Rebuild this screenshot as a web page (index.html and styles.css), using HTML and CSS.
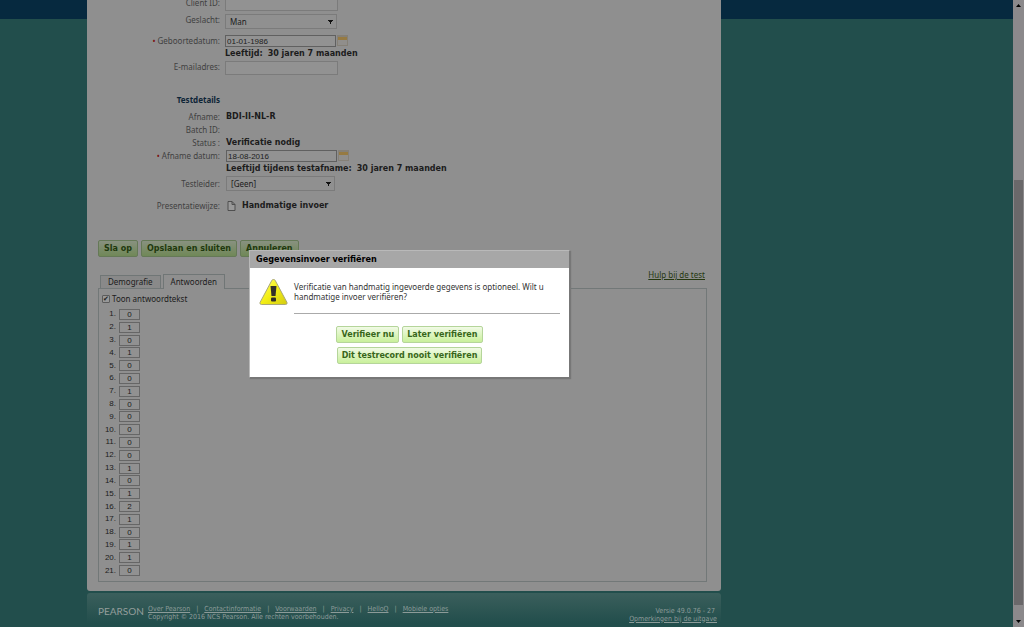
FILE: index.html
```html
<!DOCTYPE html>
<html lang="nl">
<head>
<meta charset="utf-8">
<title>Gegevensinvoer verifiëren</title>
<link rel="stylesheet" href="styles.css">
</head>
<body>
<div class="page">
  <div class="column">
    <main class="panel">
      <form class="form">
        <div class="row"><label class="label" for="client">Client ID:</label><input class="field" id="client" type="text"></div>
        <div class="row row-select"><label class="label" for="sex">Geslacht:</label><select class="select" id="sex"><option>Man</option></select></div>
        <div class="row row-date"><label class="label" for="birth"><span class="req">•</span> Geboortedatum:</label><div class="value"><div class="date"><input class="field date-field" id="birth" type="text" value="01-01-1986"><button class="cal" type="button" aria-label="Kalender"></button></div><b class="age"><span>Leeftijd:</span><span>30 jaren 7 maanden</span></b></div></div>
        <div class="row row-mail"><label class="label" for="mail">E-mailadres:</label><input class="field" id="mail" type="email"></div>
        <h2 class="label section">Testdetails</h2>
        <div class="details">
          <div class="row"><span class="label">Afname:</span><b>BDI-II-NL-R</b></div>
          <div class="row"><span class="label">Batch ID:</span></div>
          <div class="row"><span class="label">Status :</span><b>Verificatie nodig</b></div>
          <div class="row row-test"><label class="label" for="taken"><span class="req">•</span> Afname datum:</label><div class="value"><div class="date"><input class="field date-field" id="taken" type="text" value="18-08-2016"><button class="cal" type="button" aria-label="Kalender"></button></div><b class="age"><span>Leeftijd tijdens testafname:</span><span>30 jaren 7 maanden</span></b></div></div>
          <div class="row row-leader"><label class="label" for="leader">Testleider:</label><select class="select narrow" id="leader"><option>[Geen]</option></select></div>
          <div class="row row-mode"><span class="label">Presentatiewijze:</span><svg class="doc" viewBox="0 0 10 10"><path d="M2 .5h4l3 3v6H2zM6 .5v3h3" fill="#999" stroke="#484848" stroke-width=".9"/></svg><b>Handmatige invoer</b></div>
        </div>
        <div class="actions"><button class="btn dim" type="button">Sla op</button><button class="btn dim" type="button">Opslaan en sluiten</button><button class="btn dim" type="button">Annuleren</button></div>
      </form>
      <div class="tabbar">
        <div class="tabs"><button class="tab" type="button">Demografie</button><button class="tab active" type="button">Antwoorden</button></div>
        <a class="help" href="#">Hulp bij de test</a>
      </div>
      <section class="answers">
        <label class="check"><input class="tick" type="checkbox" checked><span>Toon antwoordtekst</span></label>
        <div class="list">
          <label class="answer"><span>1.</span><input type="text" value="0"></label>
          <label class="answer"><span>2.</span><input type="text" value="1"></label>
          <label class="answer"><span>3.</span><input type="text" value="0"></label>
          <label class="answer"><span>4.</span><input type="text" value="1"></label>
          <label class="answer"><span>5.</span><input type="text" value="0"></label>
          <label class="answer"><span>6.</span><input type="text" value="0"></label>
          <label class="answer"><span>7.</span><input type="text" value="1"></label>
          <label class="answer"><span>8.</span><input type="text" value="0"></label>
          <label class="answer"><span>9.</span><input type="text" value="0"></label>
          <label class="answer"><span>10.</span><input type="text" value="0"></label>
          <label class="answer"><span>11.</span><input type="text" value="0"></label>
          <label class="answer"><span>12.</span><input type="text" value="0"></label>
          <label class="answer"><span>13.</span><input type="text" value="1"></label>
          <label class="answer"><span>14.</span><input type="text" value="0"></label>
          <label class="answer"><span>15.</span><input type="text" value="1"></label>
          <label class="answer"><span>16.</span><input type="text" value="2"></label>
          <label class="answer"><span>17.</span><input type="text" value="1"></label>
          <label class="answer"><span>18.</span><input type="text" value="0"></label>
          <label class="answer"><span>19.</span><input type="text" value="1"></label>
          <label class="answer"><span>20.</span><input type="text" value="1"></label>
          <label class="answer"><span>21.</span><input type="text" value="0"></label>
        </div>
      </section>
    </main>
    <footer class="footer">
      <span class="brand">PEARSON</span>
      <div class="legal">
        <nav class="links"><a href="#">Over Pearson</a><i>|</i><a href="#">Contactinformatie</a><i>|</i><a href="#">Voorwaarden</a><i>|</i><a href="#">Privacy</a><i>|</i><a href="#">HelloQ</a><i>|</i><a href="#">Mobiele opties</a></nav>
        <div>Copyright © 2016 NCS Pearson. Alle rechten voorbehouden.</div>
      </div>
      <div class="release"><span class="version">Versie 49.0.76 - 27</span><a href="#">Opmerkingen bij de uitgave</a></div>
    </footer>
  </div>
</div>
<div class="scroll"><svg viewBox="0 0 11 11"><path d="M3 7h5L5.500 4z"/></svg><div class="thumb"></div><svg viewBox="0 0 11 11"><path d="M3 4h5L5.500 7z"/></svg></div>
<div class="dialog" role="dialog" aria-labelledby="dlg">
  <h1 class="dialog-title" id="dlg">Gegevensinvoer verifiëren</h1>
  <div class="dialog-body">
    <svg class="warn" viewBox="0 0 30 28"><defs><linearGradient id="y" x2="1" y2="1"><stop offset="0" stop-color="#ffff70"/><stop offset=".5" stop-color="#f3ee15"/><stop offset="1" stop-color="#d3cb12"/></linearGradient></defs><path d="M15 1.500Q16 1 17 3L28.500 24.500Q29 26.500 27 26.500H3Q1 26.500 1.500 24.500L13 3Q14 1 15 1.500z" fill="url(#y)" stroke="#aaa878"/><path d="M12 8h6l-1 10h-4z" fill="#33302a"/><rect x="12.500" y="19.500" width="5" height="4" rx="1" fill="#33302a"/></svg>
    <p class="message">Verificatie van handmatig ingevoerde gegevens is optioneel. Wilt u handmatige invoer verifiëren?</p>
  </div>
  <div class="dialog-actions"><button class="btn" type="button">Verifieer nu</button><button class="btn" type="button">Later verifiëren</button><button class="btn" type="button">Dit testrecord nooit verifiëren</button></div>
</div>
</body>
</html>
```
FILE: styles.css
```css
* { box-sizing: border-box; }
body {
  margin: 0;
  display: flex;
  height: 100vh;
  overflow: hidden;
  font: 8px/12px "Noto Sans", "DejaVu Sans", sans-serif;
  color: #1c1c1c;
  background: #224e4c;
}
button, input, select { font: inherit; color: inherit; margin: 0; }
b, .btn { font-family: "DejaVu Sans", sans-serif; font-weight: bold; }
.page { flex: 1; background: linear-gradient(#06293f 19px, #224e4c 19px); padding-left: 87px; }
.column { max-width: 634px; height: 100%; display: flex; flex-direction: column; }
.panel { background: #8f8f8f; border-radius: 0 0 3px 3px; padding: 0 14px 9px 11px; }
.form { margin-top: -3px; }
.row { display: flex; align-items: flex-start; gap: 5px; min-height: 13px; }
.label { width: 122px; text-align: right; color: #414141; }
.req { color: #7c1010; }
.field { width: 113px; height: 14px; padding: 0 1px; border: 1px solid #7b7b7b; background: #929292; }
.date-field { width: 111px; height: 12px; border-color: #606060; font: 8px/10px "Liberation Sans", sans-serif; }
.select {
  width: 112px; height: 15px; padding: 0 4px; border: 1px solid #7b7b7b; border-radius: 0; appearance: none;
  background: conic-gradient(from -30deg at 50% 100%, #111 60deg, transparent 0) right 3px center / 5px 4px no-repeat, #909090;
}
.date { display: flex; gap: 1px; margin-bottom: 1px; }
.cal { width: 11px; height: 11px; padding: 0; border: 1px solid #858077; background: linear-gradient(#858077 1px, #967a42 1px 4px, #908e8b 4px); }
.age { display: flex; gap: 5px; }
.row-select { margin-top: 3px; }
.row-date { margin-top: 6px; }
.row-mail { margin-top: 1px; }
.section { font-size: 8px; line-height: 12px; color: #0d2436; margin: 19px 0 5px; }
.details .row { gap: 6px; }
.row-leader { margin-top: 1px; }
.row-mode { margin-top: 8px; }
.details .row-mode, .details .row-leader { align-items: center; }
.doc { width: 10px; height: 10px; }
.narrow { width: 109px; }
.actions { display: flex; gap: 3px; margin-top: 28px; }
.btn { height: 17px; padding: 0 4px; border: 1px solid #b5d59a; border-radius: 2px; color: #38661a; background: linear-gradient(#f1fae6, #c9f09b); line-height: 12px; }
.dim { padding: 0 5px; color: #1f390e; border-color: #657957; background: linear-gradient(#889180, #708857); }
.tabbar { display: flex; justify-content: space-between; min-height: 19px; margin-top: 12px; padding: 0 2px; }
.tabs { display: flex; gap: 2px; align-items: flex-end; }
.tab { height: 13px; padding: 0 7px; border: 1px solid #707676; border-bottom: 0; background: #898989; line-height: 12px; }
.active { height: 15px; margin-bottom: -1px; background: #8f8f8f; }
.help { color: #263810; }
.answers { border: 1px solid #727878; padding: 4px 3px 4px; }
.check { display: flex; gap: 2px; align-items: center; }
.tick {
  appearance: none; width: 8px; height: 8px; border: 1px solid #5c5c5c; border-radius: 1px; background: #989898;
  display: grid; place-items: center;
}
.tick:checked::before { content: "✔"; font: 7px/7px "DejaVu Sans", sans-serif; color: #222; }
.list { display: grid; grid-auto-rows: 1fr; height: 269px; margin-top: 3px; }
.answer { display: flex; align-items: center; gap: 3px; font: 8px/10px "Liberation Sans", sans-serif; }
.answer span { width: 14px; text-align: right; }
.answer input { width: 21px; height: 11px; padding: 0; text-align: center; border: 1px solid #666; background: #919191; }
.footer { flex: 1; display: flex; align-items: center; margin-top: 2px; padding: 5px 4px 0 11px; border-radius: 3px 3px 0 0; color: #8c9b99; background: linear-gradient(#3b5f5c, #224e4c 30px); font: 7px/8px "DejaVu Sans Condensed", "DejaVu Sans", sans-serif; }
.footer a { color: inherit; }
.brand { font: 10px/12px Lato, sans-serif; width: 50px; padding-bottom: 4px; color: #949e9c; }
.legal { flex: 1; }
.links { display: flex; gap: 6px; }
.links i { font-style: normal; }
.release { display: flex; flex-direction: column; align-items: flex-end; padding-top: 4px; }
.version { padding-right: 2px; }
.scroll { width: 11px; display: flex; flex-direction: column; background: #8b898b; }
.scroll svg { width: 11px; height: 11px; flex: none; }
.thumb { margin: 169px 1px 11px; flex: 1; background: #6a686a; }
.dialog { position: absolute; left: 249px; top: 250px; width: 321px; background: #fff; border: 1px solid #b9b9b9; border-right-color: #777; border-bottom-color: #777; padding-bottom: 13px; box-shadow: 1px 1px 1px #777; }
.dialog-title { margin: 0; padding: 2px 6px 3px; background: #a7a7a7; color: #000; font: bold 9px/12px "DejaVu Sans Condensed", "DejaVu Sans", sans-serif; }
.dialog-body { display: flex; gap: 5px; padding: 10px 9px 0 8px; }
.warn { width: 31px; height: 28px; flex: none; }
.message { flex: 1; margin: 0; padding: 4px 0 11px; border-bottom: 1px solid #aaa; line-height: 10px; color: #333; }
.dialog-actions { display: flex; flex-wrap: wrap; justify-content: center; gap: 4px 3px; padding: 12px 80px 0; }
```
